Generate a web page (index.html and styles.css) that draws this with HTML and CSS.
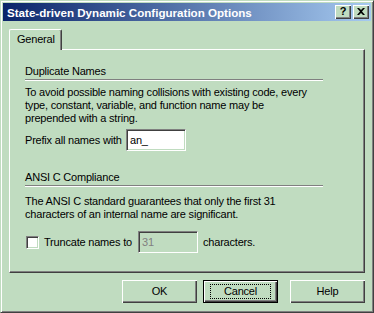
FILE: index.html
```html
<!DOCTYPE html>
<html lang="en">
<head>
    <meta charset="UTF-8">
    <title>State-driven Dynamic Configuration Options</title>
    <link rel="stylesheet" href="styles.css">
</head>
<body>

<div class="window">
    <div class="titlebar">
        <span class="title">State-driven Dynamic Configuration Options</span>
        <span class="cap-btn">?</span>
        <span class="cap-btn close">
            <svg width="8" height="7" viewBox="0 0 8 7"><path d="M0 0h2l2 2 2-2h2L5 3.5 8 7H6L4 5 2 7H0l3-3.5z" fill="#000"/></svg>
        </span>
    </div>

    <div class="body">
        <div class="tabs">
            <div class="tab">General</div>
        </div>

        <div class="panel">
            <div class="group-title first">Duplicate Names</div>
            <div class="sep"></div>
            <p class="desc">To avoid possible naming collisions with existing code, every<br>type, constant, variable, and function name may be<br>prepended with a string.</p>
            <div class="row prefix-row">
                <span class="prefix-label">Prefix all names with</span>
                <span class="edit">an_</span>
            </div>

            <div class="group-title second">ANSI C Compliance</div>
            <div class="sep"></div>
            <p class="desc second-desc">The ANSI C standard guarantees that only the first 31<br>characters of an internal name are significant.</p>
            <div class="row check-row">
                <span class="checkbox"></span>
                <span class="check-label">Truncate names to</span>
                <span class="edit disabled">31</span>
                <span>characters.</span>
            </div>
        </div>

        <div class="buttons">
            <div class="btn ok">OK</div>
            <div class="btn default"><span class="focus">Cancel</span></div>
            <div class="btn">Help</div>
        </div>
    </div>
</div>

</body>
</html>
```

FILE: styles.css
```css
body {
    margin: 0;
    font-family: 'Liberation Sans', Arial, sans-serif;
    font-size: 11px;
    line-height: 13px;
    letter-spacing: -0.2px;
    color: #000;
}
.window {
    width: 374px;
    height: 313px;
    box-sizing: border-box;
    background: #c0dcc0;
    border: 1px solid;
    border-color: #c0dcc0 #404040 #404040 #c0dcc0;
    box-shadow: inset 1px 1px #fff, inset -1px -1px #808080;
    padding: 2px;
}
.titlebar {
    height: 18px;
    display: flex;
    align-items: center;
    padding: 0 2px;
    background: linear-gradient(to right, #0a246a, #a6caf0);
}
.title {
    flex: 1;
    padding-left: 2px;
    color: #fff;
    font-weight: bold;
    font-size: 11.6px;
    letter-spacing: 0;
}
.cap-btn {
    width: 16px;
    height: 14px;
    box-sizing: border-box;
    display: flex;
    justify-content: center;
    align-items: center;
    background: #c0dcc0;
    box-shadow: inset 1px 1px #fff, inset -1px -1px #404040, inset -2px -2px #808080;
    font-weight: bold;
    font-size: 11px;
    padding-bottom: 1px;
}
.cap-btn.close {
    margin-left: 2px;
}
.body {
    padding: 8px 6px 0 6px;
}
.tabs {
    display: flex;
    height: 20px;
}
.tab {
    position: relative;
    z-index: 1;
    width: 53px;
    height: 21px;
    box-sizing: border-box;
    padding: 3px 0 0 7px;
    background: #c0dcc0;
    border-top: 1px solid #fff;
    border-left: 1px solid #fff;
    border-right: 1px solid #404040;
    border-radius: 2px 2px 0 0;
    box-shadow: inset -1px 0 #808080;
}
.panel {
    height: 224px;
    box-sizing: border-box;
    border: 1px solid;
    border-color: #fff #404040 #404040 #fff;
    box-shadow: inset -1px -1px #808080;
    padding: 15px 15px 0 15px;
}
.group-title.second {
    margin-top: 20px;
}
.sep {
    width: 298px;
    margin-top: 1px;
    border-top: 1px solid #808080;
    border-bottom: 1px solid #fff;
}
.desc {
    margin: 5px 0 0 0;
}
.desc.second-desc {
    margin-top: 8px;
}
.row {
    display: flex;
    align-items: center;
}
.prefix-row {
    margin-top: 4px;
}
.prefix-label {
    width: 101px;
}
.edit {
    width: 60px;
    height: 22px;
    box-sizing: border-box;
    background: #fff;
    border: 1px solid;
    border-color: #808080 #fff #fff #808080;
    box-shadow: inset 1px 1px #404040, inset -1px -1px #c0dcc0;
    padding: 4px 0 0 3px;
}
.edit.disabled {
    background: #c0dcc0;
    color: #808080;
    margin-right: 5px;
}
.check-row {
    margin-top: 10px;
}
.checkbox {
    width: 13px;
    height: 13px;
    box-sizing: border-box;
    background: #fff;
    border: 1px solid;
    border-color: #808080 #fff #fff #808080;
    box-shadow: inset 1px 1px #404040, inset -1px -1px #c0dcc0;
    margin: 0 5px 0 1px;
}
.check-label {
    width: 94px;
}
.buttons {
    display: flex;
    justify-content: flex-end;
    margin-top: 7px;
}
.btn {
    width: 75px;
    height: 23px;
    box-sizing: border-box;
    display: flex;
    justify-content: center;
    align-items: center;
    background: #c0dcc0;
    box-shadow: inset 1px 1px #fff, inset -1px -1px #404040, inset -2px -2px #808080;
}
.btn.ok {
    margin-right: 6px;
}
.btn.default {
    margin-right: 12px;
    border: 1px solid #000;
}
.focus {
    width: 61px;
    height: 15px;
    box-sizing: border-box;
    border: 1px dotted #000;
    display: flex;
    justify-content: center;
    align-items: center;
}
```
